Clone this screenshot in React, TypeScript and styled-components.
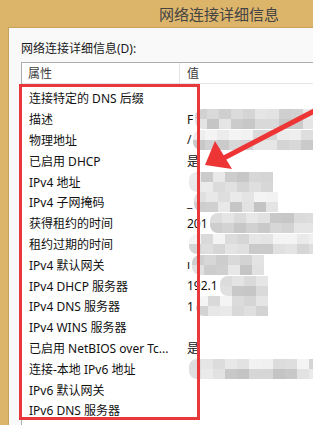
import React from "react";
import styled, { createGlobalStyle } from "styled-components";

type Mosaic = { cols: number; seed: number; light?: boolean };
type Row = { name: string; value?: string; mosaic?: Mosaic };

const rows: Row[] = [
  { name: "连接特定的 DNS 后缀" },
  { name: "描述", value: "F", mosaic: { cols: 11, seed: 1 } },
  { name: "物理地址", value: "/", mosaic: { cols: 11, seed: 2, light: true } },
  { name: "已启用 DHCP", value: "是" },
  { name: "IPv4 地址", mosaic: { cols: 7, seed: 3 } },
  { name: "IPv4 子网掩码", value: "_", mosaic: { cols: 7, seed: 4, light: true } },
  { name: "获得租约的时间", value: "201", mosaic: { cols: 9, seed: 5 } },
  { name: "租约过期的时间", mosaic: { cols: 11, seed: 6, light: true } },
  { name: "IPv4 默认网关", value: "ı", mosaic: { cols: 6, seed: 7 } },
  { name: "IPv4 DHCP 服务器", value: "192.1", mosaic: { cols: 4, seed: 8 } },
  { name: "IPv4 DNS 服务器", value: "1", mosaic: { cols: 6, seed: 9, light: true } },
  { name: "IPv4 WINS 服务器" },
  { name: "已启用 NetBIOS over Tc...", value: "是" },
  { name: "连接-本地 IPv6 地址", mosaic: { cols: 11, seed: 10, light: true } },
  { name: "IPv6 默认网关" },
  { name: "IPv6 DNS 服务器" },
];

function shade(seed: number, i: number, light?: boolean) {
  const n = (seed * 53 + i * 37 + i * i * 11) % 40;
  const v = Math.min(244, (light ? 212 : 196) + n);
  return `rgb(${v},${v},${v})`;
}

const GlobalStyle = createGlobalStyle`
  html, body {
    margin: 0;
    padding: 0;
    overflow: hidden;
    background: #dcb56b;
  }
  body {
    font-family: "Noto Sans", "Noto Sans CJK SC", sans-serif;
  }
`;

const Window = styled.div`
  position: relative;
  width: 313px;
  height: 425px;
  display: flex;
  flex-direction: column;
  background: #dcb56b;
  overflow: hidden;
`;

const TitleBar = styled.div`
  height: 27px;
  flex-shrink: 0;
  display: flex;
  align-items: center;
  padding-left: 159px;
  font-size: 15px;
  color: #444;
  font-family: "Noto Sans CJK SC", sans-serif;
`;

const Body = styled.div`
  flex: 1;
  margin-left: 8px;
  background: #f9f9f9;
  border-left: 1px solid #c6a25c;
  border-top: 1px solid #c6a25c;
  padding: 13px 0 0 12px;
  display: flex;
  flex-direction: column;
`;

const Label = styled.div`
  font-size: 12px;
  line-height: 16px;
  color: #1a1a1a;
`;

const ListBox = styled.div`
  flex: 1;
  margin-top: 5px;
  background: #fff;
  border-left: 1px solid #abadb3;
  border-top: 1px solid #abadb3;
`;

const Header = styled.div`
  display: grid;
  grid-template-columns: 158px 1fr;
  height: 20px;
  border-bottom: 1px solid #e5e5e5;
  font-size: 12px;
  color: #3c3c3c;
`;

const HeaderCell = styled.div<{ $divider?: boolean }>`
  display: flex;
  align-items: center;
  padding-left: ${(p) => (p.$divider ? "6px" : "7px")};
  border-right: ${(p) => (p.$divider ? "1px solid #e5e5e5" : "none")};
`;

const Rows = styled.div`
  display: grid;
  grid-auto-rows: 20.8px;
  padding-top: 4px;
`;

const RowLine = styled.div`
  display: grid;
  grid-template-columns: 158px 1fr;
  align-items: center;
  font-size: 12px;
  color: #111;
`;

const NameCell = styled.div`
  padding-left: 7px;
  white-space: nowrap;
  overflow: hidden;
`;

const ValueCell = styled.div`
  display: flex;
  align-items: center;
  padding-left: 7px;
  white-space: nowrap;
  overflow: hidden;
`;

const MosaicGrid = styled.div<{ $cols: number }>`
  flex-shrink: 0;
  display: grid;
  grid-template-columns: repeat(${(p) => p.$cols}, 12px);
  grid-template-rows: 10px 10px;
  margin-left: 2px;
  filter: blur(0.7px);
  border-radius: 8px 0 0 8px;
  overflow: hidden;
`;

const Overlay = styled.svg`
  position: absolute;
  left: 0;
  top: 0;
  pointer-events: none;
`;

const RedBox = styled.div`
  position: absolute;
  left: 19px;
  top: 84px;
  width: 175px;
  height: 330px;
  border: 3px solid #e8383b;
  pointer-events: none;
`;

function MosaicStrip({ m }: { m: Mosaic }) {
  const cells = Array.from({ length: m.cols * 2 }, (_, i) => i);
  return (
    <MosaicGrid $cols={m.cols}>
      {cells.map((i) => (
        <span key={i} style={{ background: shade(m.seed, i, m.light && i < m.cols) }} />
      ))}
    </MosaicGrid>
  );
}

export default function App() {
  return (
    <>
      <GlobalStyle />
      <Window>
        <TitleBar>网络连接详细信息</TitleBar>
        <Body>
          <Label>网络连接详细信息(D):</Label>
          <ListBox>
            <Header>
              <HeaderCell $divider>属性</HeaderCell>
              <HeaderCell>值</HeaderCell>
            </Header>
            <Rows>
              {rows.map((r) => (
                <RowLine key={r.name}>
                  <NameCell>{r.name}</NameCell>
                  <ValueCell>
                    {r.value}
                    {r.mosaic && <MosaicStrip m={r.mosaic} />}
                  </ValueCell>
                </RowLine>
              ))}
            </Rows>
          </ListBox>
        </Body>
        <RedBox />
        <Overlay width="313" height="425" viewBox="0 0 313 425">
          <line x1="320" y1="108" x2="222" y2="159" stroke="#ee3535" strokeWidth="5" strokeLinecap="round" />
          <polygon points="205,165 215,141 232,169" fill="#ee3535" />
        </Overlay>
      </Window>
    </>
  );
}
